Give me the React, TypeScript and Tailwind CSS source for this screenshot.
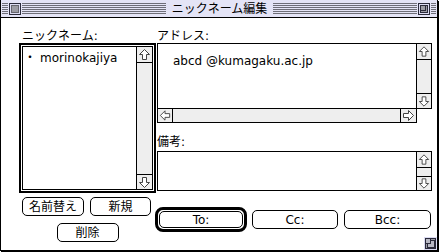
import React from 'react';

type Dir = 'up' | 'down' | 'left' | 'right';

function Arrow({ dir }: { dir: Dir }) {
  const rot = { up: 0, right: 90, down: 180, left: 270 }[dir];
  return (
    <svg width="15" height="15" viewBox="0 0 15 15">
      <g transform={`rotate(${rot} 7.5 7.5)`}>
        <polygon
          points="7.5,2.5 12.5,7.5 9.5,7.5 9.5,12.5 5.5,12.5 5.5,7.5 2.5,7.5"
          fill="#ffffff"
          stroke="#444444"
          strokeWidth="1"
          strokeLinejoin="miter"
        />
      </g>
    </svg>
  );
}

function VScroll({ className = '' }: { className?: string }) {
  return (
    <div className={`flex w-[16px] flex-col bg-[#eeeeee] ${className}`}>
      <div className="flex h-[16px] items-center justify-center border-b border-black">
        <Arrow dir="up" />
      </div>
      <div className="flex-1" />
      <div className="flex h-[15px] items-center justify-center border-t border-black">
        <Arrow dir="down" />
      </div>
    </div>
  );
}

function Stripes({ className = '' }: { className?: string }) {
  return (
    <div
      className={`h-[11px] bg-[repeating-linear-gradient(to_bottom,#6e6e78_0px,#6e6e78_1px,transparent_1px,transparent_2px)] ${className}`}
    />
  );
}

function Button({ className = '', children }: { className?: string; children: React.ReactNode }) {
  return (
    <div
      className={`flex h-[19px] items-center justify-center rounded-[5px] border border-black bg-white leading-none ${className}`}
    >
      {children}
    </div>
  );
}

function TitleBar() {
  return (
    <div className="flex h-[18px] items-center border-b border-black bg-[#e4e4f6] pl-px pr-px">
      <Stripes className="w-[6px]" />
      <div className="ml-px h-[12px] w-[12px] border border-[#2a2a3a] bg-[#dcdcf2] p-px">
        <div className="h-full w-full border border-[#66666e] bg-[#9c9ca4]" />
      </div>
      <Stripes className="ml-px flex-1" />
      <div className="px-[6px] leading-[14px]">ニックネーム編集</div>
      <Stripes className="flex-1" />
      <svg width="12" height="12" viewBox="0 0 12 12" className="ml-px">
        <rect x="0.5" y="0.5" width="11" height="11" fill="#dcdcf2" stroke="#2a2a3a" />
        <rect x="2" y="2" width="8" height="8" fill="#9c9ca4" />
        <rect x="2.5" y="2.5" width="5" height="5" fill="none" stroke="#2a2a3a" />
        <rect x="2.5" y="2.5" width="7" height="7" fill="none" stroke="#2a2a3a" />
      </svg>
      <Stripes className="ml-px w-[5px]" />
    </div>
  );
}

export default function App() {
  return (
    <div className="h-[252px] w-[439px] bg-white font-['DejaVu_Sans','Noto_Sans_CJK_JP',sans-serif] text-[12px] text-black">
      <div className="relative flex h-[251px] w-[438px] flex-col border-x border-b border-black bg-white shadow-[1px_1px_0_0_#000]">
        <TitleBar />

        <div className="flex flex-1 gap-px pl-[18px]">
          {/* left column */}
          <div className="flex w-[137px] flex-col">
            <div className="h-[25px] pl-[3px] pt-[12px] leading-[12px]">ニックネーム:</div>
            <div className="h-[150px] border-2 border-black p-px">
              <div className="flex h-full border border-black">
                <div className="flex flex-1 items-start pl-px pt-[4px] leading-[14px]">
                  <span>・</span>
                  <span className="ml-[4px]">morinokajiya</span>
                </div>
                <VScroll className="border-l border-black" />
              </div>
            </div>
            <div className="mt-[4px] flex gap-[6px] pl-[3px]">
              <Button className="w-[62px]">名前替え</Button>
              <Button className="w-[61px]">新規</Button>
            </div>
            <div className="mt-[7px] flex justify-center">
              <Button className="w-[62px]">削除</Button>
            </div>
          </div>

          {/* right column */}
          <div className="flex w-[275px] flex-col">
            <div className="h-[25px] pt-[12px] leading-[12px]">アドレス:</div>
            <div className="flex h-[80px] flex-col">
              <div className="flex h-[66px]">
                <div className="flex-1 border-l border-t border-black pl-[15px] pt-[10px] leading-[14px]">
                  abcd @kumagaku.ac.jp
                </div>
                <VScroll className="border border-black" />
              </div>
              <div className="-mt-px flex h-[15px] w-[260px] items-center justify-between border border-black bg-[#eeeeee]">
                <div className="flex h-full w-[15px] items-center justify-center border-r border-black">
                  <Arrow dir="left" />
                </div>
                <div className="flex h-full w-[16px] items-center justify-center border-l border-black">
                  <Arrow dir="right" />
                </div>
              </div>
            </div>
            <div className="h-[28px] pt-[13px] leading-[12px]">備考:</div>
            <div className="flex h-[40px]">
              <div className="flex-1 border-y border-l border-black" />
              <div className="flex w-[16px] flex-col border border-black bg-[#eeeeee]">
                <div className="flex h-[16px] items-center justify-center border-b border-black">
                  <Arrow dir="up" />
                </div>
                <div className="flex-1" />
                <div className="flex h-[14px] items-center justify-center border-t border-black">
                  <Arrow dir="down" />
                </div>
              </div>
            </div>
            <div className="mt-[16px] flex items-center">
              <div className="-ml-[2px] h-[25px] w-[92px] rounded-[8px] border-[3px] border-black p-px">
                <div className="flex h-full items-center justify-center rounded-[5px] border border-black leading-none">
                  To:
                </div>
              </div>
              <Button className="ml-[5px] w-[86px]">Cc:</Button>
              <Button className="ml-[6px] w-[87px]">Bcc:</Button>
            </div>
          </div>
        </div>

        <svg width="13" height="13" viewBox="0 0 13 13" className="absolute bottom-0 right-0">
          <rect x="0" y="0" width="13" height="13" fill="#dcdcf2" />
          <rect x="1.5" y="1.5" width="10" height="10" fill="#9c9ca4" stroke="#2a2a3a" />
          <rect x="3.5" y="3.5" width="7" height="7" fill="#b8b8c4" stroke="#2a2a3a" />
          <rect x="1.5" y="1.5" width="5" height="5" fill="#b8b8c4" stroke="#2a2a3a" />
        </svg>
      </div>
    </div>
  );
}
